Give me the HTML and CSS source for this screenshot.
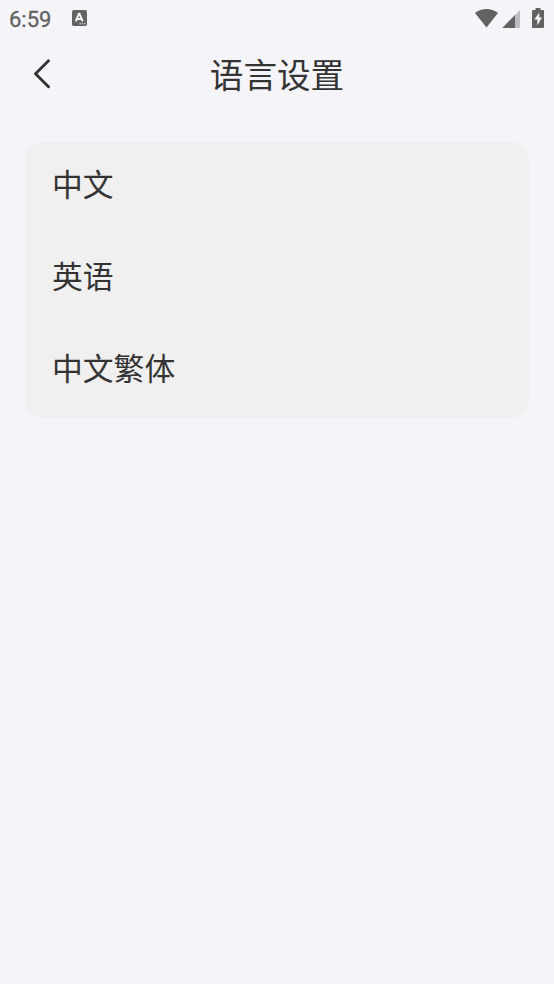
FILE: index.html
```html
<!DOCTYPE html>
<html lang="zh-CN">
<head>
<meta charset="utf-8">
<title>语言设置</title>
<link rel="stylesheet" href="styles.css">
</head>
<body>
<div class="status">
  <span class="time">6:59</span>
  <svg class="app" width="15" height="16" viewBox="0 0 15 16"><rect width="15" height="16" rx="1.8" fill="#626262"/><path d="M3.700 11.300 6.900 3.800h.6l3.200 7.500M5 9h4.400" fill="none" stroke="#f4f4f9" stroke-width="1.900"/><path d="M7.500 13.700h1.3m1 0h1.3m1 0h1.3" stroke="#f4f4f9" stroke-width="1.1"/></svg>
  <span class="space"></span>
  <svg class="wifi" width="23" height="19" viewBox="0 0 23 19"><path d="M0 4C6.500-1.300 16.500-1.300 23 4L11.500 18.500Z" fill="#626262"/></svg>
  <svg class="signal" width="18" height="18" viewBox="0 0 18 18"><path d="M.300 18 18 0V18Z" fill="#bdbdc1"/><path d="M.300 18 13 5V18Z" fill="#626262"/></svg>
  <svg class="battery" width="12" height="20" viewBox="0 0 12 20"><path d="M3.500 0h5v2H11q1 0 1 1v16q0 1-1 1H1q-1 0-1-1V3q0-1 1-1h2.500Z" fill="#626262"/><path d="M7.300 4.500 2.300 11.500H5.300V17.500L9.900 9.500H7.300Z" fill="#f4f4f9"/></svg>
</div>
<header class="header">
  <svg class="back" width="18" height="30" viewBox="0 0 18 30"><path d="M15.500 1.700 2.500 14.700 15.500 27.700" fill="none" stroke="#333" stroke-width="2.900" stroke-linecap="round" stroke-linejoin="round"/></svg>
  <h1 class="title">语言设置</h1>
</header>
<ul class="list">
  <li class="item"><span class="label">中文</span></li>
  <li class="item"><span class="label">英语</span></li>
  <li class="item"><span class="label">中文繁体</span></li>
</ul>
</body>
</html>
```
FILE: styles.css
```css
* { box-sizing: border-box; }
body {
  margin: 0;
  min-height: 984px;
  background: #f4f4f9;
  color: #333;
  font-family: "Noto Sans CJK SC", sans-serif;
}
svg { display: block; flex: none; }
.status {
  display: flex;
  align-items: flex-start;
  height: 38px;
  padding: 0 10px 0 9px;
}
.time {
  width: 63px;
  padding-top: 7px;
  font: 22px/25px Roboto, sans-serif;
  color: #626262;
  -webkit-text-stroke: 0.3px #626262;
}
.app { margin-top: 10px; }
.space { flex: 1; }
.wifi { margin-top: 9px; }
.signal { margin: 10px 0 0 4px; }
.battery { margin: 8px 0 0 12px; }
.header {
  display: grid;
  grid-template-columns: 60px 1fr 60px;
  align-items: center;
  height: 74px;
}
.back { margin: -3px 0 0 33px; }
.title {
  margin: -2px 0 0;
  text-align: center;
  font-size: 33.600px;
  line-height: 50px;
  font-weight: 400;
}
.list {
  margin: 30px 25px 0;
  padding: 0;
  list-style: none;
  background: #f0f0f0;
  border-radius: 18px;
}
.item {
  height: 92px;
  padding-left: 27px;
}
.label {
  display: block;
  height: 92px;
  padding-top: 18px;
  font-size: 30.800px;
  line-height: 46px;
}
.item:not(:last-child) .label { border-bottom: 1px solid #f2f2f2; }
```
